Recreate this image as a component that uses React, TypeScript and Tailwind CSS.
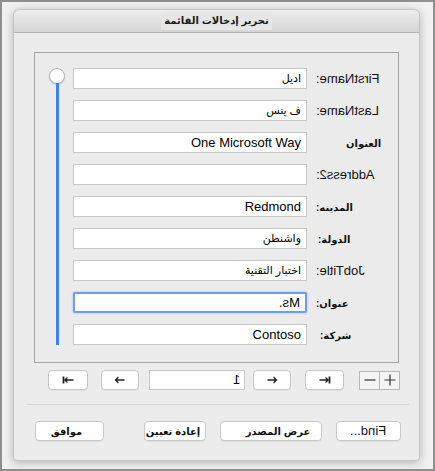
import React from 'react';

const font = { fontFamily: '"Liberation Sans", "DejaVu Sans", sans-serif' };

type Row = {
  label: string;
  flip?: boolean;
  value: string;
  arabicValue?: boolean;
  flipValue?: boolean;
  focused?: boolean;
  labelPad?: string;
};

const rows: Row[] = [
  { label: 'FirstName:', flip: true, value: 'اديل', arabicValue: true },
  { label: 'LastName:', flip: true, value: 'ف ينس', arabicValue: true },
  { label: 'العنوان', value: 'One Microsoft Way', labelPad: 'pl-[30px]' },
  { label: 'Address2:', flip: true, value: '' },
  { label: 'المدينه:', value: 'Redmond' },
  { label: 'الدولة:', value: 'واشنطن', arabicValue: true, labelPad: 'pl-[2px]' },
  { label: 'JobTitle:', flip: true, value: 'اختبار التقنية', arabicValue: true },
  { label: 'عنوان:', value: 'Ms.', flipValue: true, focused: true },
  { label: 'شركة:', value: 'Contoso', labelPad: 'pl-[4px]' },
];

const NavIcon = ({ kind }: { kind: 'first' | 'prev' | 'next' | 'last' }) => (
  <svg width="14" height="10" viewBox="0 0 14 10" fill="none" stroke="#222" strokeWidth="1.3">
    {kind === 'first' && (
      <>
        <path d="M2.5 1.5v7" strokeWidth="1.8" />
        <path d="M3.5 5h9M6.5 2.5L3.8 5l2.7 2.5" />
      </>
    )}
    {kind === 'prev' && <path d="M2.5 5h9M5.5 2L2.5 5l3 3" />}
    {kind === 'next' && <path d="M2.5 5h9M8.5 2l3 3-3 3" />}
    {kind === 'last' && (
      <>
        <path d="M11.5 1.5v7" strokeWidth="1.8" />
        <path d="M1.5 5h9M7.5 2.5L10.2 5 7.5 7.5" />
      </>
    )}
  </svg>
);

const NavButton = ({ kind, w, ml }: { kind: 'first' | 'prev' | 'next' | 'last'; w: string; ml: string }) => (
  <button className={`${w} ${ml} h-[20px] flex items-center justify-center bg-white border border-[#c9c9c9] rounded-[4px] shadow-[0_1px_0_rgba(0,0,0,0.05)]`}>
    <NavIcon kind={kind} />
  </button>
);

const DialogButton = ({ children, w, ml, className = '' }: { children: React.ReactNode; w: string; ml: string; className?: string }) => (
  <button className={`${w} ${ml} h-[20px] flex items-center justify-center whitespace-nowrap bg-white border border-[#c9c9c9] rounded-[4px] text-[10px] font-bold text-[#111] shadow-[0_1px_0_rgba(0,0,0,0.05)] ${className}`}>
    {children}
  </button>
);

export default function App() {
  return (
    <div style={font} className="w-[435px] h-[471px] border-2 border-[#8f8f8f] bg-[#f1f1f1] overflow-hidden">
      <div className="ml-[11px] mt-[7px] w-[407px] h-[452px] bg-[#ececec] rounded-t-[6px] rounded-b-[4px] border border-[#c4c4c4] shadow-[0_2px_10px_rgba(0,0,0,0.25)] flex flex-col">
        {/* title bar */}
        <div className="h-[23px] shrink-0 rounded-t-[6px] bg-gradient-to-b from-[#ededed] to-[#d5d5d5] border-b border-[#b3b3b3] flex items-center justify-center">
          <span dir="rtl" className="px-[3px] bg-[#e6e6e6] text-[10px] font-bold text-[#1a1a1a] leading-[18px] whitespace-nowrap">
            تحرير إدخالات القائمة
          </span>
        </div>

        {/* group box */}
        <div className="ml-[20px] mt-[19px] w-[365px] h-[311px] border border-[#a3a3a3] bg-[#ebebeb] flex pt-[15px]">
          <div className="ml-[14px] w-[16px] h-[277px] flex flex-col items-center">
            <div className="w-[16px] h-[16px] shrink-0 rounded-full bg-white border border-[#b5b5b5] shadow-[0_1px_1px_rgba(0,0,0,0.15)]" />
            <div className="w-[3px] flex-1 bg-[#3b82f6] -mt-[1px]" />
          </div>
          <div className="ml-[8px] flex flex-col gap-[11px]">
            {rows.map((r) => (
              <div key={r.label} className="flex items-center h-[21px]">
                <div
                  className={`w-[234px] h-[21px] shrink-0 bg-white flex items-center justify-end pr-[5px] text-black whitespace-nowrap ${
                    r.arabicValue ? 'text-[11px]' : 'text-[13px]'
                  } ${
                    r.focused ? 'border-2 border-[#6f9ded] rounded-[2px] shadow-[0_0_2px_rgba(80,140,240,0.6)]' : 'border border-[#c8c8c8]'
                  }`}
                >
                  <span className={r.flipValue ? 'inline-block -scale-x-100' : ''} dir={r.arabicValue ? 'rtl' : 'ltr'}>
                    {r.value}
                  </span>
                </div>
                <div className={`ml-[9px] text-[13px] text-[#111] whitespace-nowrap ${r.labelPad ?? ''}`}>
                  {r.flip ? (
                    <span className="inline-block -scale-x-100">{r.label}</span>
                  ) : (
                    <span dir="rtl" className="inline-block font-bold text-[10px]">{r.label}</span>
                  )}
                </div>
              </div>
            ))}
          </div>
        </div>

        {/* navigation row */}
        <div className="flex items-center mt-[7px]">
          <NavButton kind="first" w="w-[40px]" ml="ml-[34px]" />
          <NavButton kind="prev" w="w-[38px]" ml="ml-[13px]" />
          <div className="ml-[10px] w-[96px] h-[20px] bg-white border border-[#c8c8c8] flex items-center justify-end pr-[4px] text-[13px] text-black">
            <span className="inline-block -scale-x-100">1</span>
          </div>
          <NavButton kind="next" w="w-[38px]" ml="ml-[8px]" />
          <NavButton kind="last" w="w-[39px]" ml="ml-[14px]" />
          <div className="ml-[15px] flex h-[19px] border border-[#b8b8b8] bg-[#f4f4f4]">
            <div className="w-[20px] flex items-center justify-center border-r border-[#b8b8b8]">
              <svg width="12" height="12" viewBox="0 0 12 12" stroke="#333" strokeWidth="1.2">
                <path d="M0.5 6h11" />
              </svg>
            </div>
            <div className="w-[19px] flex items-center justify-center">
              <svg width="12" height="12" viewBox="0 0 12 12" stroke="#333" strokeWidth="1.2">
                <path d="M0.5 6h11M6 0.5v11" />
              </svg>
            </div>
          </div>
        </div>

        {/* separator */}
        <div className="ml-[13px] mt-[14px] w-[382px] h-px bg-[#d6d6d6]" />

        {/* bottom buttons */}
        <div className="flex items-center mt-[16px]">
          <DialogButton w="w-[69px]" ml="ml-[21px]" className="pr-[6px]">
            <span dir="rtl">موافق</span>
          </DialogButton>
          <DialogButton w="w-[62px]" ml="ml-[40px]" className="pr-[4px]">
            <span dir="rtl">إعادة تعيين</span>
          </DialogButton>
          <DialogButton w="w-[102px]" ml="ml-[14px]" className="pl-[14px]">
            <span dir="rtl">عرض المصدر</span>
          </DialogButton>
          <DialogButton w="w-[65px]" ml="ml-[14px]">
            <span className="inline-block -scale-x-100 font-normal text-[13px]">Find...</span>
          </DialogButton>
        </div>
      </div>
    </div>
  );
}
